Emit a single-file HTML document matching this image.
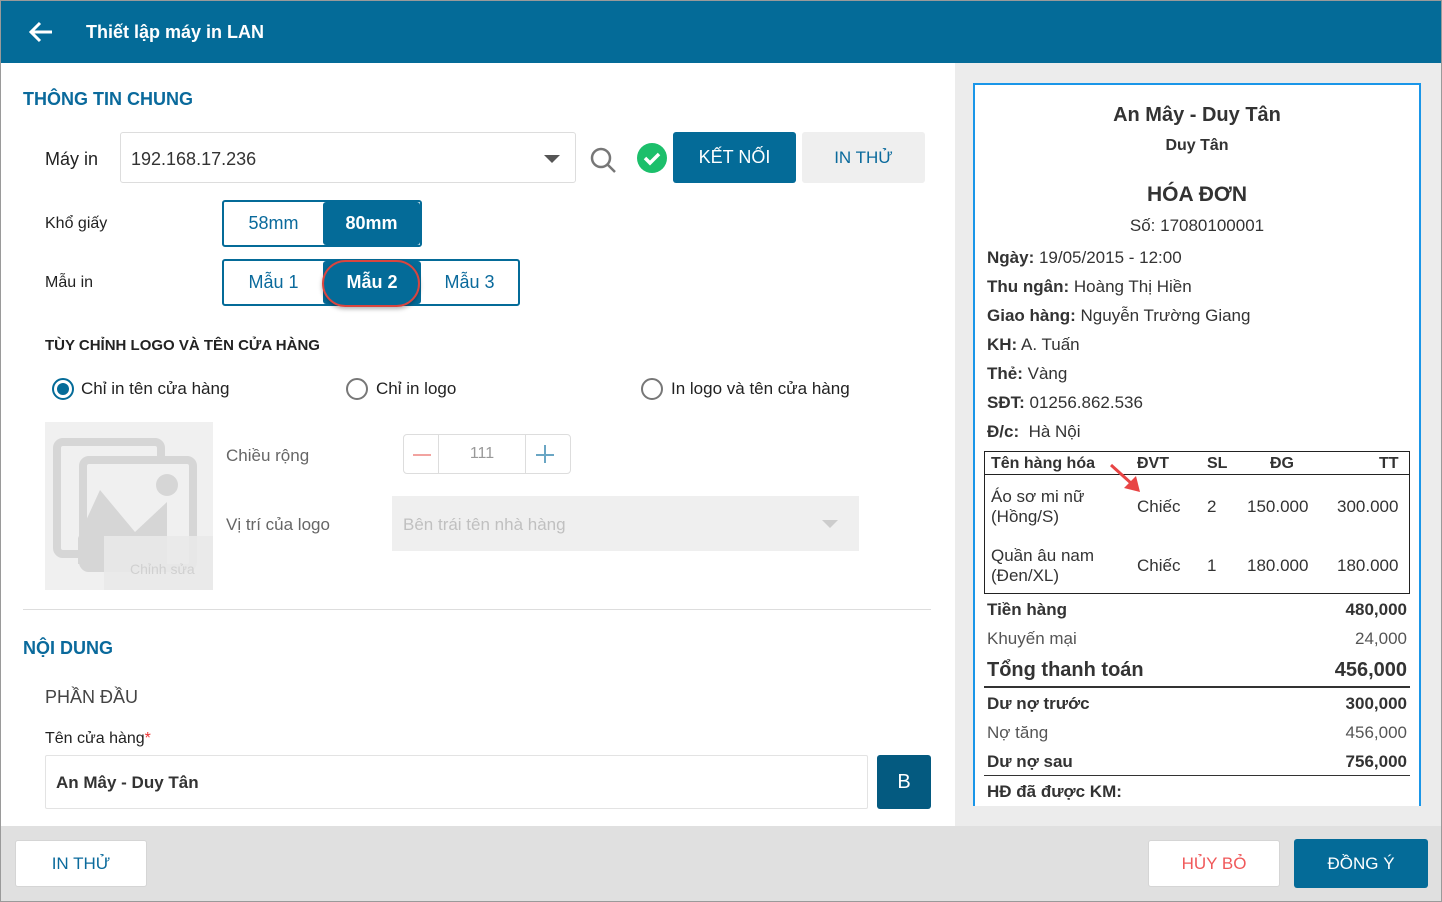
<!DOCTYPE html>
<html><head><meta charset="utf-8"><style>
*{box-sizing:border-box;margin:0;padding:0}
body{width:1442px;height:902px;position:relative;overflow:hidden;font-family:"Liberation Sans",sans-serif;background:#fff;color:#222}
.a{position:absolute}
.hdr{left:0;top:0;width:1442px;height:63px;background:#046b98;border:1px solid #9a9a9a;border-bottom:none}
.blue{color:#0a6a9c}
.t{white-space:nowrap}
.btn{display:flex;align-items:center;justify-content:center;border-radius:3px;font-size:17px}
.r{font-size:17px;color:#333}
.rb{font-weight:bold;color:#333}
</style></head><body>
<div class="a hdr"></div>
<svg class="a" style="left:28px;top:20px" width="26" height="24" viewBox="0 0 26 24"><path d="M24 12H4M12 3L3 12l9 9" stroke="#fff" stroke-width="3" fill="none"/></svg>
<div class="a t" style="left:86px;top:22px;color:#fff;font-size:18px;font-weight:bold">Thiết lập máy in LAN</div>
<div class="a" style="left:0;top:63px;width:1px;height:839px;background:#9a9a9a"></div>
<div class="a" style="left:1441px;top:63px;width:1px;height:839px;background:#9a9a9a"></div>
<div class="a" style="left:0;top:901px;width:1442px;height:1px;background:#9a9a9a"></div>

<div class="a t blue" style="left:23px;top:89px;font-size:18px;font-weight:bold">THÔNG TIN CHUNG</div>
<div class="a t" style="left:45px;top:149px;font-size:18px">Máy in</div>
<div class="a" style="left:120px;top:132px;width:456px;height:51px;border:1px solid #ddd;border-radius:3px"></div>
<div class="a t" style="left:131px;top:149px;font-size:18px;color:#333">192.168.17.236</div>
<div class="a" style="left:544px;top:155px;width:0;height:0;border-left:8px solid transparent;border-right:8px solid transparent;border-top:8px solid #555"></div>
<svg class="a" style="left:588px;top:145px" width="30" height="30"><circle cx="13" cy="13" r="9" stroke="#777" stroke-width="2.5" fill="none"/><path d="M20 20l7 7" stroke="#777" stroke-width="2.5"/></svg>
<svg class="a" style="left:636px;top:142px" width="32" height="32"><circle cx="16" cy="16" r="15" fill="#1cbf6b"/><path d="M9 16l5 5 9-9" stroke="#fff" stroke-width="3.5" fill="none"/></svg>
<div class="a btn" style="left:673px;top:132px;width:123px;height:51px;background:#046b98;color:#fff;font-size:18px">KẾT NỐI</div>
<div class="a btn blue" style="left:802px;top:132px;width:123px;height:51px;background:#efefef;font-size:17px">IN THỬ</div>

<div class="a t" style="left:45px;top:215px;font-size:16px">Khổ giấy</div>
<div class="a" style="left:222px;top:200px;width:200px;height:47px;border:2px solid #046b98;border-radius:3px;overflow:hidden;display:flex">
<div class="btn blue" style="width:99px;font-size:18px">58mm</div><div class="btn" style="flex:1;background:#046b98;color:#fff;font-size:18px;font-weight:bold">80mm</div></div>
<div class="a t" style="left:45px;top:274px;font-size:16px">Mẫu in</div>
<div class="a" style="left:222px;top:259px;width:298px;height:47px;border:2px solid #046b98;border-radius:3px;overflow:hidden;display:flex">
<div class="btn blue" style="width:99px;font-size:18px">Mẫu 1</div><div class="btn" style="width:98px;background:#046b98;color:#fff;font-size:18px;font-weight:bold">Mẫu 2</div><div class="btn blue" style="flex:1;font-size:18px">Mẫu 3</div></div>
<div class="a" style="left:322px;top:260px;width:98px;height:47px;border:2.5px solid #d9453f;border-radius:24px;box-shadow:0 2px 4px rgba(0,0,0,.3)"></div>

<div class="a t" style="left:45px;top:337px;font-size:15px;font-weight:bold">TÙY CHỈNH LOGO VÀ TÊN CỬA HÀNG</div>
<div class="a" style="left:52px;top:378px;width:22px;height:22px;border:2px solid #046b98;border-radius:50%"><div style="margin:3px;width:12px;height:12px;border-radius:50%;background:#046b98"></div></div>
<div class="a t" style="left:81px;top:379px;font-size:17px">Chỉ in tên cửa hàng</div>
<div class="a" style="left:346px;top:378px;width:22px;height:22px;border:2px solid #777;border-radius:50%"></div>
<div class="a t" style="left:376px;top:379px;font-size:17px">Chỉ in logo</div>
<div class="a" style="left:641px;top:378px;width:22px;height:22px;border:2px solid #777;border-radius:50%"></div>
<div class="a t" style="left:671px;top:379px;font-size:17px">In logo và tên cửa hàng</div>

<div class="a" style="left:45px;top:422px;width:168px;height:168px;background:#f0f0f0"></div>
<svg class="a" style="left:45px;top:422px" width="168" height="168"><rect x="12" y="20" width="104" height="112" rx="6" fill="none" stroke="#d6d6d6" stroke-width="8"/><rect x="38" y="38" width="110" height="108" rx="6" fill="#f0f0f0" stroke="#d6d6d6" stroke-width="8"/><circle cx="122" cy="63" r="11" fill="#d6d6d6"/><path d="M33 116L55 68l35 42 32-30v62H33z" fill="#d6d6d6"/><rect x="59" y="114" width="109" height="54" fill="#e9e9e9" opacity=".9"/><text x="85" y="152" font-family="Liberation Sans" font-size="14" fill="#d0d0d0">Chỉnh sửa</text></svg>
<div class="a t" style="left:226px;top:446px;font-size:17px;color:#666">Chiều rộng</div>
<div class="a" style="left:403px;top:434px;width:168px;height:40px;border:1px solid #ddd;border-radius:4px;display:flex">
<div style="width:35px;border-right:1px solid #ddd;position:relative"><div class="a" style="left:9px;top:19px;width:18px;height:1.5px;background:#f2a3a0"></div></div>
<div style="width:87px;border-right:1px solid #ddd;text-align:center;line-height:38px;color:#999;font-size:16px">111</div>
<div style="flex:1;position:relative"><div class="a" style="left:10px;top:19px;width:18px;height:1.5px;background:#6aa6c4"></div><div class="a" style="left:18px;top:10px;width:1.5px;height:18px;background:#6aa6c4"></div></div></div>
<div class="a t" style="left:226px;top:515px;font-size:17px;color:#666">Vị trí của logo</div>
<div class="a" style="left:392px;top:496px;width:467px;height:55px;background:#efefef"></div>
<div class="a t" style="left:403px;top:515px;font-size:17px;color:#c0c0c0">Bên trái tên nhà hàng</div>
<div class="a" style="left:822px;top:520px;border-left:8px solid transparent;border-right:8px solid transparent;border-top:8px solid #ccc"></div>
<div class="a" style="left:23px;top:609px;width:908px;height:1px;background:#ddd"></div>

<div class="a t blue" style="left:23px;top:638px;font-size:18px;font-weight:bold">NỘI DUNG</div>
<div class="a t" style="left:45px;top:687px;font-size:18px;color:#444">PHẦN ĐẦU</div>
<div class="a t" style="left:45px;top:730px;font-size:16px">Tên cửa hàng<span style="color:#e33">*</span></div>
<div class="a" style="left:45px;top:755px;width:823px;height:54px;border:1px solid #e3e3e3;border-radius:2px"></div>
<div class="a t" style="left:56px;top:773px;font-size:17px;font-weight:bold;color:#333">An Mây - Duy Tân</div>
<div class="a btn" style="left:877px;top:755px;width:54px;height:54px;background:#045a80;color:#fff;font-size:20px">B</div>

<div class="a" style="left:955px;top:63px;width:486px;height:763px;background:#ececec"></div>
<div class="a" style="left:973px;top:83px;width:448px;height:723px;background:#fff;border:2px solid #1a96e8;border-bottom:none"></div>
<div class="a t rb" style="left:973px;width:448px;text-align:center;top:104px;font-size:20px">An Mây - Duy Tân</div>
<div class="a t rb" style="left:973px;width:448px;text-align:center;top:137px;font-size:16px">Duy Tân</div>
<div class="a t rb" style="left:973px;width:448px;text-align:center;top:183px;font-size:21px">HÓA ĐƠN</div>
<div class="a t r" style="left:973px;width:448px;text-align:center;top:216px">Số: 17080100001</div>
<div class="a t r" style="left:987px;top:248px"><b>Ngày:</b> 19/05/2015 - 12:00</div>
<div class="a t r" style="left:987px;top:277px"><b>Thu ngân:</b> Hoàng Thị Hiền</div>
<div class="a t r" style="left:987px;top:306px"><b>Giao hàng:</b> Nguyễn Trường Giang</div>
<div class="a t r" style="left:987px;top:335px"><b>KH:</b> A. Tuấn</div>
<div class="a t r" style="left:987px;top:364px"><b>Thẻ:</b> Vàng</div>
<div class="a t r" style="left:987px;top:393px"><b>SĐT:</b> 01256.862.536</div>
<div class="a t r" style="left:987px;top:422px"><b>Đ/c:</b>&nbsp; Hà Nội</div>
<div class="a" style="left:984px;top:451px;width:426px;height:143px;border:1.5px solid #222"></div>
<div class="a" style="left:984px;top:474px;width:426px;height:1px;background:#222"></div>
<div class="a t rb" style="left:991px;top:455px;font-size:16px">Tên hàng hóa</div>
<div class="a t rb" style="left:1137px;top:455px;font-size:16px">ĐVT</div>
<div class="a t rb" style="left:1207px;top:455px;font-size:16px">SL</div>
<div class="a t rb" style="left:1270px;top:455px;font-size:16px">ĐG</div>
<div class="a t rb" style="left:1379px;top:455px;font-size:16px">TT</div>
<div class="a r" style="left:991px;top:487px;line-height:20px">Áo sơ mi nữ<br>(Hồng/S)</div>
<div class="a t r" style="left:1137px;top:497px">Chiếc</div><div class="a t r" style="left:1207px;top:497px">2</div>
<div class="a t r" style="left:1247px;top:497px">150.000</div><div class="a t r" style="left:1337px;top:497px">300.000</div>
<div class="a r" style="left:991px;top:546px;line-height:20px">Quần âu nam<br>(Đen/XL)</div>
<div class="a t r" style="left:1137px;top:556px">Chiếc</div><div class="a t r" style="left:1207px;top:556px">1</div>
<div class="a t r" style="left:1247px;top:556px">180.000</div><div class="a t r" style="left:1337px;top:556px">180.000</div>
<svg class="a" style="left:1108px;top:462px" width="36" height="34"><path d="M3 3L24 22" stroke="#e84545" stroke-width="3"/><path d="M16 26L32 30 28 14z" fill="#e84545"/></svg>
<div class="a t rb" style="left:987px;top:600px;font-size:17px">Tiền hàng</div><div class="a t rb" style="right:35px;top:600px;font-size:17px">480,000</div>
<div class="a t r" style="left:987px;top:629px;font-size:17px;color:#555">Khuyến mại</div><div class="a t r" style="right:35px;top:629px;font-size:17px;color:#555">24,000</div>
<div class="a t rb" style="left:987px;top:659px;font-size:20px">Tổng thanh toán</div><div class="a t rb" style="right:35px;top:659px;font-size:20px">456,000</div>
<div class="a" style="left:984px;top:686px;width:426px;height:2px;background:#333"></div>
<div class="a t rb" style="left:987px;top:694px;font-size:17px">Dư nợ trước</div><div class="a t rb" style="right:35px;top:694px;font-size:17px">300,000</div>
<div class="a t r" style="left:987px;top:723px;font-size:17px;color:#555">Nợ tăng</div><div class="a t r" style="right:35px;top:723px;font-size:17px;color:#555">456,000</div>
<div class="a t rb" style="left:987px;top:752px;font-size:17px">Dư nợ sau</div><div class="a t rb" style="right:35px;top:752px;font-size:17px">756,000</div>
<div class="a" style="left:984px;top:775px;width:426px;height:1px;background:#333"></div>
<div class="a t rb" style="left:987px;top:782px;font-size:17px">HĐ đã được KM:</div>

<div class="a" style="left:1px;top:826px;width:1440px;height:75px;background:#e0e0e0"></div>
<div class="a btn blue" style="left:15px;top:840px;width:132px;height:47px;background:#fff;border:1px solid #d5d5d5">IN THỬ</div>
<div class="a btn" style="left:1148px;top:840px;width:132px;height:47px;background:#fff;border:1px solid #d5d5d5;color:#f0595a">HỦY BỎ</div>
<div class="a btn" style="left:1294px;top:839px;width:134px;height:49px;background:#046b98;color:#fff">ĐỒNG Ý</div>
</body></html>
